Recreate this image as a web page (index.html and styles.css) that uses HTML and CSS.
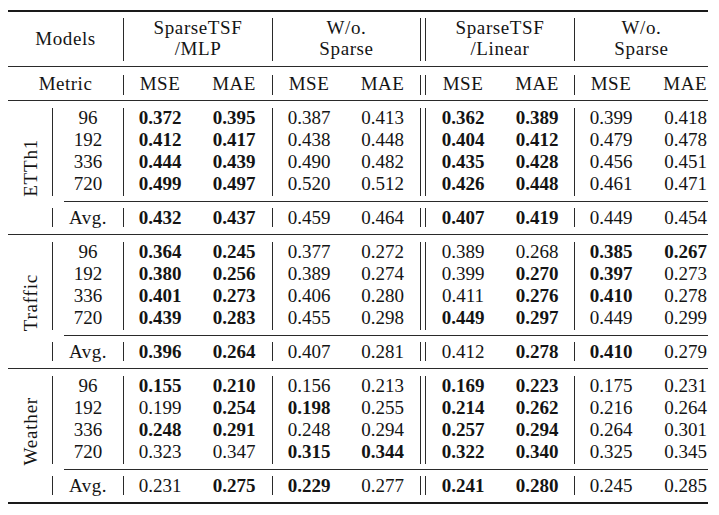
FILE: index.html
```html
<!DOCTYPE html>
<html>
<head>
<meta charset="utf-8">
<link rel="stylesheet" href="styles.css">
</head>
<body>
<div class="table">
  <div class="rule-thick"></div>
  <div class="row head1">
    <div class="hcell models">Models</div>
    <div class="v"></div>
    <div class="hcell span2"><span>SparseTSF</span><span>/MLP</span></div>
    <div class="v"></div>
    <div class="hcell span2"><span>W/o.</span><span>Sparse</span></div>
    <div class="v"></div>
    <div></div>
    <div class="v"></div>
    <div class="hcell span2"><span>SparseTSF</span><span>/Linear</span></div>
    <div class="v"></div>
    <div class="hcell span2"><span>W/o.</span><span>Sparse</span></div>
  </div>
  <div class="rule"></div>
  <div class="row metric">
    <div class="mcell models">Metric</div>
    <div class="v"></div>
    <div class="mcell">MSE</div><div class="mcell">MAE</div>
    <div class="v"></div>
    <div class="mcell">MSE</div><div class="mcell">MAE</div>
    <div class="v"></div>
    <div></div>
    <div class="v"></div>
    <div class="mcell">MSE</div><div class="mcell">MAE</div>
    <div class="v"></div>
    <div class="mcell">MSE</div><div class="mcell last">MAE</div>
  </div>
  <div class="rule"></div>

  <!-- ETTh1 -->
  <div class="row block">
    <div class="label"><span>ETTh1</span></div>
    <div class="v"></div>
    <div class="col"><div>96</div><div>192</div><div>336</div><div>720</div></div>
    <div class="v"></div>
    <div class="col"><div class="b">0.372</div><div class="b">0.412</div><div class="b">0.444</div><div class="b">0.499</div></div>
    <div class="col"><div class="b">0.395</div><div class="b">0.417</div><div class="b">0.439</div><div class="b">0.497</div></div>
    <div class="v"></div>
    <div class="col"><div>0.387</div><div>0.438</div><div>0.490</div><div>0.520</div></div>
    <div class="col"><div>0.413</div><div>0.448</div><div>0.482</div><div>0.512</div></div>
    <div class="v"></div>
    <div></div>
    <div class="v"></div>
    <div class="col"><div class="b">0.362</div><div class="b">0.404</div><div class="b">0.435</div><div class="b">0.426</div></div>
    <div class="col"><div class="b">0.389</div><div class="b">0.412</div><div class="b">0.428</div><div class="b">0.448</div></div>
    <div class="v"></div>
    <div class="col"><div>0.399</div><div>0.479</div><div>0.456</div><div>0.461</div></div>
    <div class="col last"><div>0.418</div><div>0.478</div><div>0.451</div><div>0.471</div></div>
  </div>
  <div class="cmid"></div>
  <div class="row avg">
    <div></div>
    <div class="v"></div>
    <div class="acell word">Avg.</div>
    <div class="v"></div>
    <div class="acell b">0.432</div><div class="acell b">0.437</div>
    <div class="v"></div>
    <div class="acell">0.459</div><div class="acell">0.464</div>
    <div class="v"></div>
    <div></div>
    <div class="v"></div>
    <div class="acell b">0.407</div><div class="acell b">0.419</div>
    <div class="v"></div>
    <div class="acell">0.449</div><div class="acell last">0.454</div>
  </div>
  <div class="rule"></div>

  <!-- Traffic -->
  <div class="row block">
    <div class="label"><span>Traffic</span></div>
    <div class="v"></div>
    <div class="col"><div>96</div><div>192</div><div>336</div><div>720</div></div>
    <div class="v"></div>
    <div class="col"><div class="b">0.364</div><div class="b">0.380</div><div class="b">0.401</div><div class="b">0.439</div></div>
    <div class="col"><div class="b">0.245</div><div class="b">0.256</div><div class="b">0.273</div><div class="b">0.283</div></div>
    <div class="v"></div>
    <div class="col"><div>0.377</div><div>0.389</div><div>0.406</div><div>0.455</div></div>
    <div class="col"><div>0.272</div><div>0.274</div><div>0.280</div><div>0.298</div></div>
    <div class="v"></div>
    <div></div>
    <div class="v"></div>
    <div class="col"><div>0.389</div><div>0.399</div><div>0.411</div><div class="b">0.449</div></div>
    <div class="col"><div>0.268</div><div class="b">0.270</div><div class="b">0.276</div><div class="b">0.297</div></div>
    <div class="v"></div>
    <div class="col"><div class="b">0.385</div><div class="b">0.397</div><div class="b">0.410</div><div>0.449</div></div>
    <div class="col last"><div class="b">0.267</div><div>0.273</div><div>0.278</div><div>0.299</div></div>
  </div>
  <div class="cmid"></div>
  <div class="row avg">
    <div></div>
    <div class="v"></div>
    <div class="acell word">Avg.</div>
    <div class="v"></div>
    <div class="acell b">0.396</div><div class="acell b">0.264</div>
    <div class="v"></div>
    <div class="acell">0.407</div><div class="acell">0.281</div>
    <div class="v"></div>
    <div></div>
    <div class="v"></div>
    <div class="acell">0.412</div><div class="acell b">0.278</div>
    <div class="v"></div>
    <div class="acell b">0.410</div><div class="acell last">0.279</div>
  </div>
  <div class="rule"></div>

  <!-- Weather -->
  <div class="row block">
    <div class="label"><span>Weather</span></div>
    <div class="v"></div>
    <div class="col"><div>96</div><div>192</div><div>336</div><div>720</div></div>
    <div class="v"></div>
    <div class="col"><div class="b">0.155</div><div>0.199</div><div class="b">0.248</div><div>0.323</div></div>
    <div class="col"><div class="b">0.210</div><div class="b">0.254</div><div class="b">0.291</div><div>0.347</div></div>
    <div class="v"></div>
    <div class="col"><div>0.156</div><div class="b">0.198</div><div>0.248</div><div class="b">0.315</div></div>
    <div class="col"><div>0.213</div><div>0.255</div><div>0.294</div><div class="b">0.344</div></div>
    <div class="v"></div>
    <div></div>
    <div class="v"></div>
    <div class="col"><div class="b">0.169</div><div class="b">0.214</div><div class="b">0.257</div><div class="b">0.322</div></div>
    <div class="col"><div class="b">0.223</div><div class="b">0.262</div><div class="b">0.294</div><div class="b">0.340</div></div>
    <div class="v"></div>
    <div class="col"><div>0.175</div><div>0.216</div><div>0.264</div><div>0.325</div></div>
    <div class="col last"><div>0.231</div><div>0.264</div><div>0.301</div><div>0.345</div></div>
  </div>
  <div class="cmid"></div>
  <div class="row avg">
    <div></div>
    <div class="v"></div>
    <div class="acell word">Avg.</div>
    <div class="v"></div>
    <div class="acell">0.231</div><div class="acell b">0.275</div>
    <div class="v"></div>
    <div class="acell b">0.229</div><div class="acell">0.277</div>
    <div class="v"></div>
    <div></div>
    <div class="v"></div>
    <div class="acell b">0.241</div><div class="acell b">0.280</div>
    <div class="v"></div>
    <div class="acell">0.245</div><div class="acell last">0.285</div>
  </div>
  <div class="rule-thick"></div>
</div>
</body>
</html>
```

FILE: styles.css
```css
body {
  margin: 10px 8px;
  background: #ffffff;
  color: #141414;
  font-family: "Liberation Serif", "Times New Roman", serif;
  font-size: 19px;
}

.table {
  width: 700px;
}

.rule-thick {
  height: 2px;
  background: #1a1a1a;
}

.rule {
  height: 1px;
  background: #2a2a2a;
}

.cmid {
  height: 1px;
  margin-left: 56px;
  background: #2a2a2a;
}

.row {
  display: grid;
  grid-template-columns: 44px 1px 70px 1px 72px 76px 1px 72px 75px 1px 4px 1px 74px 74px 1px 72px 61px;
}

.v {
  background: #2a2a2a;
}

/* header row 1 */
.head1 {
  height: 54px;
}

.head1 .v {
  margin: 6px 0 5px;
}

.hcell {
  display: flex;
  flex-direction: column;
  align-items: center;
  justify-content: center;
  line-height: 21px;
  letter-spacing: 0.6px;
  padding-bottom: 3px;
}

.head1 .models {
  padding-bottom: 1px;
}

.models {
  grid-column: span 3;
}

.span2 {
  grid-column: span 2;
}

/* metric row */
.metric {
  height: 33px;
}

.metric .v {
  margin: 8px 0 5px;
}

.mcell {
  display: flex;
  align-items: center;
  justify-content: center;
  letter-spacing: 0.5px;
}

.mcell.last {
  justify-content: flex-end;
  padding-right: 1px;
}

/* data block */
.block {
  height: 100px;
}

.block .v {
  margin: 7px 0 5px;
}

.col {
  display: flex;
  flex-direction: column;
  align-items: center;
  padding-top: 6px;
  line-height: 22px;
}

.col.last {
  align-items: flex-end;
  padding-right: 1px;
}

.label {
  display: flex;
  flex-direction: column;
  justify-content: flex-end;
  align-items: center;
  padding-bottom: 4px;
}

.label span {
  writing-mode: vertical-rl;
  transform: rotate(180deg);
  line-height: 1;
  letter-spacing: 0.8px;
}

/* average row */
.avg {
  height: 32px;
}

.avg .v {
  margin: 6px 0 7px;
}

.acell {
  display: flex;
  align-items: center;
  justify-content: center;
}

.acell.word {
  letter-spacing: 0.5px;
}

.acell.last {
  justify-content: flex-end;
  padding-right: 1px;
}

.b {
  font-weight: bold;
}
```
